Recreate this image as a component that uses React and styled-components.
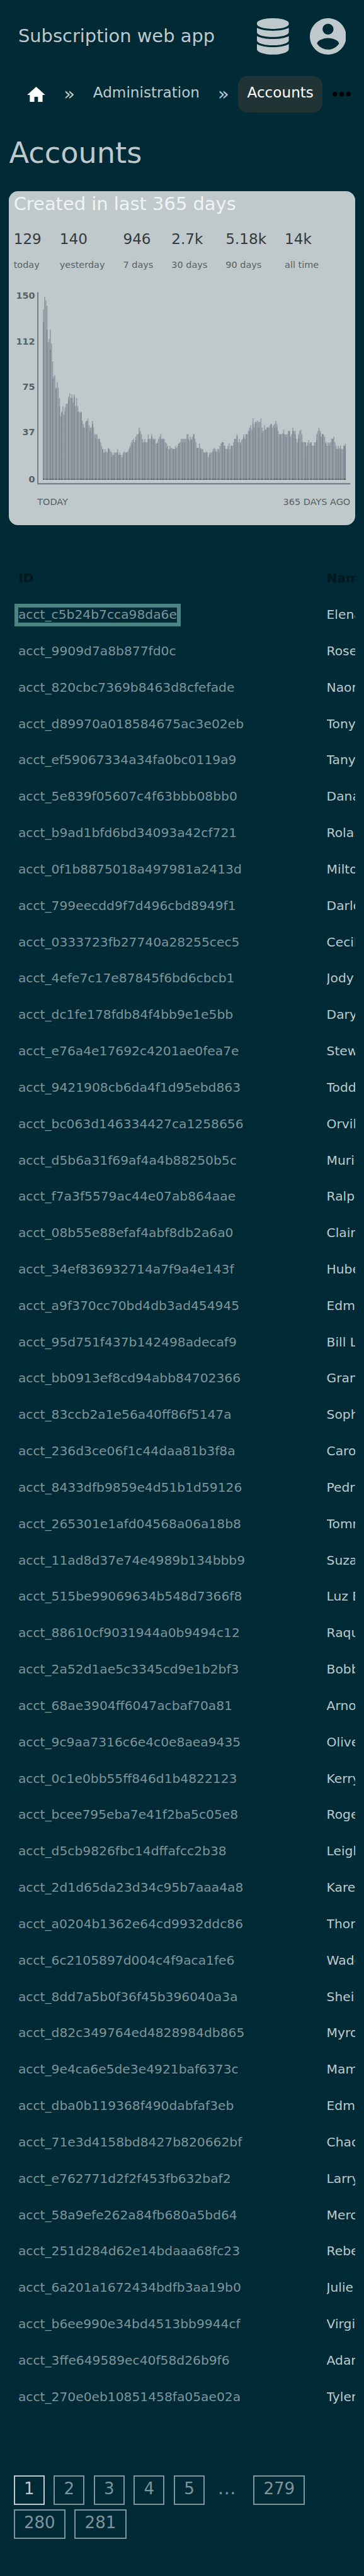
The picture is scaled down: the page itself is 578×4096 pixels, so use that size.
import React from "react";
import styled, { createGlobalStyle } from "styled-components";

const SCALE = 4096 / 4532;
const u = (n) => `${n * SCALE}px`;

const c = {
  page: "#002b36",
  text: "#bfc9cc",
  muted: "#7f9499",
  card: "#bfc9cc",
  ink: "#333b3d",
  inkSoft: "#566163",
  axis: "#6c7780",
  focus: "#4b8583",
};

const GlobalStyle = createGlobalStyle`
  *, *::before, *::after { box-sizing: border-box; }
  html, body { margin: 0; padding: 0; background: ${c.page}; }
  body { font-family: "DejaVu Sans", sans-serif; color: ${c.text}; }
  svg { display: block; flex: none; }
`;

const Page = styled.div`
  width: 578px;
  height: 4096px;
  overflow: hidden;
  display: flex;
  flex-direction: column;
`;

const Header = styled.header`
  display: flex;
  align-items: center;
  height: ${u(134)};
  padding: 0 ${u(31.6)} ${u(6)} ${u(32)};
`;

const AppName = styled.div`
  flex: 1;
  font-size: ${u(32)};
  line-height: ${u(40)};
  padding-bottom: ${u(2)};
  white-space: nowrap;
`;

const HeaderIcons = styled.div`
  display: flex;
  gap: ${u(36)};
`;

const Nav = styled.nav`
  display: flex;
  align-items: center;
  gap: ${u(16)};
  height: ${u(64)};
  padding: 0 ${u(23.6)} 0 ${u(32)};
`;

const Crumb = styled.a`
  display: flex;
  align-items: center;
  height: ${u(64)};
  padding: 0 ${u(16)} ${(p) => (p.$icon ? 0 : u(6))};
  border-radius: ${u(16)};
  font-size: ${u(25.6)};
  white-space: nowrap;
  color: ${(p) => (p.$active ? "#fff" : c.text)};
  background: ${(p) => (p.$active ? "#203435" : "transparent")};
`;

const Separator = styled.span`
  font-size: ${u(32)};
  line-height: ${u(40)};
  padding-bottom: ${u(3)};
`;

const Heading = styled.h1`
  margin: 0;
  height: ${u(138)};
  padding: ${u(6)} ${u(16)} 0;
  font-size: ${u(51.2)};
  font-weight: 400;
  line-height: ${u(132)};
`;

const Card = styled.section`
  margin: 0 ${u(15.6)} 0 ${u(16)};
  height: ${u(588)};
  border-radius: ${u(16)};
  background: ${c.card};
`;

const CardTitle = styled.h2`
  margin: 0;
  padding: 0 ${u(8)};
  font-size: ${u(32)};
  font-weight: 400;
  line-height: ${u(46)};
  color: #f0f3f4;
`;

const Stats = styled.div`
  display: flex;
  gap: ${u(32)};
  height: ${u(118)};
  padding: ${u(16)} ${u(8)} 0;
`;

const Stat = styled.div`
  display: flex;
  flex-direction: column;
  gap: ${u(9)};
  white-space: nowrap;
`;

const StatValue = styled.span`
  font-size: ${u(25.6)};
  line-height: ${u(46)};
  color: ${c.ink};
`;

const StatLabel = styled.span`
  font-size: ${u(16)};
  line-height: ${u(28)};
  color: ${c.inkSoft};
`;

const ChartText = styled.text`
  font-size: 16px;
  font-weight: ${(p) => (p.$bold ? 700 : 400)};
  fill: ${c.inkSoft};
`;

const Table = styled.div`
  margin: ${u(62)} ${u(15.6)} 0 ${u(16)};
  overflow: hidden;
`;

const Row = styled.div`
  display: grid;
  grid-template-columns: ${u(541.8)} 1fr;
  align-items: center;
  height: ${u(64)};
  padding-left: ${u(16)};
  font-size: ${u(22.4)};
  line-height: ${u(26)};
  white-space: nowrap;
`;

const HeadRow = styled(Row)`
  font-weight: 700;
  color: #00171d;
`;

const AccountLink = styled.a`
  justify-self: start;
  color: ${c.muted};
  outline: ${(p) => (p.$focused ? `6px solid ${c.focus}` : "none")};
`;

const Name = styled.span`
  overflow: hidden;
`;

const Pagination = styled.div`
  display: flex;
  flex-wrap: wrap;
  gap: ${u(8)} ${u(16)};
  padding: ${u(106)} ${u(64)} 0 ${u(24)};
`;

const PageLink = styled.a`
  height: ${u(52)};
  padding: 0 ${u(15.8)};
  border: 2px solid currentColor;
  font-size: ${u(28.8)};
  line-height: ${u(44)};
  color: ${(p) => (p.$current ? c.text : c.muted)};
`;

const Ellipsis = styled.span`
  width: ${u(53.5)};
  padding-left: ${u(7)};
  font-size: ${u(32)};
  line-height: ${u(46)};
  color: ${c.muted};
`;

/* Each entry is one pixel column: [height, height of the overlapped part]. */
const bars = [
  [150,139],[161],[158],[153,132],[121],[124],[132,115],[120],[104,89],[91],[92],[81,80],[86],[81],[72,65],[56],
  [60,59],[65],[57],[64,60],[67],[67],[73,70],[76],[72],[75,72],[68],[75,73],[65],[72],[65,60],[60],[59],[60,59],
  [52],[49,46],[46],[51],[52,52],[54],[48],[46,43],[46],[52,49],[46],[40],[40,36],[40],[36],[36,36],[33],[30],
  [27,27],[24],[27,24],[25],[24],[28,27],[27],[25],[24,20],[22],[24,22],[24],[24],[27,24],[22],[24,22],[22],[20],
  [24,22],[25],[24],[24,24],[25],[27],[30,28],[33],[35,32],[36],[33],[38,35],[40],[40],[46,41],[43],[40],[36,33],
  [33],[36,33],[33],[33],[40,36],[36],[36],[40,38],[36],[36,35],[36],[32],[33,32],[36],[38],[40,36],[36],[36,36],
  [36],[33],[32,28],[30],[27],[30,27],[28],[28],[27,27],[27],[30,27],[28],[30],[32,32],[33],[36],[36,33],[36],
  [36,33],[36],[40],[40,36],[35],[38],[36,35],[38],[40,40],[36],[33],[28,28],[28],[32],[28,27],[27],[27],[24,24],
  [24],[25,24],[24],[20],[24,22],[24],[24],[27,25],[28],[27,25],[25],[27],[27,24],[30],[32],[33,33],[33],[30,30],
  [27],[27],[30,27],[32],[27],[30,30],[30],[33],[36,36],[36],[40,38],[33],[36],[33,32],[35],[36],[40,38],[36],
  [40,40],[40],[43],[46,43],[48],[44],[54,49],[46],[51,49],[51],[52],[51,46],[51],[54],[46,41],[43],[48],[44,44],
  [46],[46,46],[46],[48],[49,49],[46],[48],[49,46],[52],[49,46],[43],[40],[40,40],[40],[41],[44,40],[40],[40,38],
  [40],[43],[43,43],[38],[40],[46,43],[43],[43,40],[36],[33],[40,36],[43],[44],[40,33],[33],[33],[33,33],[30],
  [33,30],[35],[32],[33,33],[30],[30],[33,30],[33],[40,35],[43],[46],[43,41],[38],[40,40],[40],[38],[33,32],[30],
  [33],[32,30],[33],[36],[36,36],[38],[33],[30,27],[27],[30,27],[28],[30,27],[27],[27],[30,30],[32,30],
];

const ticks = [
  ["150", 526],
  ["112", 606],
  ["75", 686],
  ["37", 766],
  ["0", 848],
];

const BASE = 844;
const LEFT = 76;

function Chart() {
  const area =
    `M${LEFT} ${BASE}` +
    bars.map(([h], i) => `V${BASE - h * 2}H${LEFT + (i + 1) * 2}`).join("") +
    `V${BASE}Z`;
  const overlap = bars
    .map(([, d], i) => (d ? `M${LEFT + i * 2} ${BASE}v${-d * 2}h2v${d * 2}z` : ""))
    .join("");
  const feet = bars
    .map(([, d], i) => (d ? `M${LEFT + i * 2} ${BASE}v-2h2v2z` : ""))
    .join("");
  return (
    <svg width={608 * SCALE} height={400 * SCALE} viewBox="16 500 608 400">
      <path d={area} fill="#969fa7" />
      <path d={overlap} fill="#818a92" />
      <rect x={LEFT} y={BASE - 2} width={bars.length * 2} height="2" fill="#78818a" />
      <path d={feet} fill="#555e65" />
      <path d="M67 514V851H616" fill="none" stroke={c.axis} strokeWidth="2" />
      {ticks.map(([label, y]) => (
        <ChartText key={label} $bold x="62" y={y} textAnchor="end">
          {label}
        </ChartText>
      ))}
      <ChartText x="66" y="888">TODAY</ChartText>
      <ChartText x="616" y="888" textAnchor="end">365 DAYS AGO</ChartText>
    </svg>
  );
}

const stats = [
  ["129", "today"],
  ["140", "yesterday"],
  ["946", "7 days"],
  ["2.7k", "30 days"],
  ["5.18k", "90 days"],
  ["14k", "all time"],
];

const accounts = [
  ["c5b24b7cca98da6e", "Elena"],
  ["9909d7a8b877fd0c", "Rose"],
  ["820cbc7369b8463d8cfefade", "Naomi"],
  ["d89970a018584675ac3e02eb", "Tony"],
  ["ef59067334a34fa0bc0119a9", "Tanya"],
  ["5e839f05607c4f63bbb08bb0", "Dana"],
  ["b9ad1bfd6bd34093a42cf721", "Roland"],
  ["0f1b8875018a497981a2413d", "Milton"],
  ["799eecdd9f7d496cbd8949f1", "Darlene"],
  ["0333723fb27740a28255cec5", "Cecil"],
  ["4efe7c17e87845f6bd6cbcb1", "Jody"],
  ["dc1fe178fdb84f4bb9e1e5bb", "Daryl"],
  ["e76a4e17692c4201ae0fea7e", "Stewart"],
  ["9421908cb6da4f1d95ebd863", "Todd"],
  ["bc063d146334427ca1258656", "Orville"],
  ["d5b6a31f69af4a4b88250b5c", "Muriel"],
  ["f7a3f5579ac44e07ab864aae", "Ralph"],
  ["08b55e88efaf4abf8db2a6a0", "Claire"],
  ["34ef836932714a7f9a4e143f", "Hubert"],
  ["a9f370cc70bd4db3ad454945", "Edmund"],
  ["95d751f437b142498adecaf9", "Bill L"],
  ["bb0913ef8cd94abb84702366", "Grant"],
  ["83ccb2a1e56a40ff86f5147a", "Sophie"],
  ["236d3ce06f1c44daa81b3f8a", "Carole"],
  ["8433dfb9859e4d51b1d59126", "Pedro"],
  ["265301e1afd04568a06a18b8", "Tommy"],
  ["11ad8d37e74e4989b134bbb9", "Suzanne"],
  ["515be99069634b548d7366f8", "Luz B"],
  ["88610cf9031944a0b9494c12", "Raquel"],
  ["2a52d1ae5c3345cd9e1b2bf3", "Bobby"],
  ["68ae3904ff6047acbaf70a81", "Arnold"],
  ["9c9aa7316c6e4c0e8aea9435", "Oliver"],
  ["0c1e0bb55ff846d1b4822123", "Kerry"],
  ["bcee795eba7e41f2ba5c05e8", "Roger"],
  ["d5cb9826fbc14dffafcc2b38", "Leigh"],
  ["2d1d65da23d34c95b7aaa4a8", "Karen"],
  ["a0204b1362e64cd9932ddc86", "Thomas"],
  ["6c2105897d004c4f9aca1fe6", "Wade"],
  ["8dd7a5b0f36f45b396040a3a", "Sheila"],
  ["d82c349764ed4828984db865", "Myron"],
  ["9e4ca6e5de3e4921baf6373c", "Mamie"],
  ["dba0b119368f490dabfaf3eb", "Edmund"],
  ["71e3d4158bd8427b820662bf", "Chad"],
  ["e762771d2f2f453fb632baf2", "Larry"],
  ["58a9efe262a84fb680a5bd64", "Mercedes"],
  ["251d284d62e14bdaaa68fc23", "Rebecca"],
  ["6a201a1672434bdfb3aa19b0", "Julie"],
  ["b6ee990e34bd4513bb9944cf", "Virginia"],
  ["3ffe649589ec40f58d26b9f6", "Adam"],
  ["270e0eb10851458fa05ae02a", "Tyler"],
];

const pages = ["1", "2", "3", "4", "5", "…", "279", "280", "281"];

function DatabaseIcon() {
  return (
    <svg width={56 * SCALE} height={64 * SCALE} viewBox="0 0 56 64" fill={c.text}>
      <path d="M0 8.8C0 3.9 12.5 0 28 0S56 3.9 56 8.8V10.2C56 15 43.5 18.7 28 18.7S0 15 0 10.2Z" />
      <path d="M0 17C6 20.4 16.5 22 28 22S50 20.4 56 17V24.5C56 29.2 43.5 33 28 33S0 29.2 0 24.5Z" />
      <path d="M0 31.2C6 34.8 16.5 36.5 28 36.5S50 34.8 56 31.2V39C56 43.8 43.5 47.7 28 47.7S0 43.8 0 39Z" />
      <path d="M0 45.3C6 49 16.5 50.8 28 50.8S50 49 56 45.3V54.5C56 59.7 43.5 64 28 64S0 59.7 0 54.5Z" />
    </svg>
  );
}

function AccountIcon() {
  return (
    <svg width={64 * SCALE} height={64 * SCALE} viewBox="2 2 20 20" fill={c.text}>
      <path d="M12 2C6.48 2 2 6.48 2 12s4.48 10 10 10 10-4.48 10-10S17.52 2 12 2zm0 3c1.66 0 3 1.34 3 3s-1.34 3-3 3-3-1.34-3-3 1.34-3 3-3zm0 14.2c-2.5 0-4.71-1.28-6-3.22.03-1.99 4-3.08 6-3.08 1.99 0 5.97 1.09 6 3.08-1.29 1.94-3.5 3.22-6 3.22z" />
    </svg>
  );
}

function HomeIcon() {
  return (
    <svg width={32 * SCALE} height={27.2 * SCALE} viewBox="2 3 20 17" fill="#fff">
      <path d="M10 20v-6h4v6h5v-8h3L12 3 2 12h3v8z" />
    </svg>
  );
}

const MoreIcon = styled.svg`
  margin-left: auto;
`;

export default function App() {
  return (
    <Page>
      <GlobalStyle />
      <Header>
        <AppName>Subscription web app</AppName>
        <HeaderIcons>
          <DatabaseIcon />
          <AccountIcon />
        </HeaderIcons>
      </Header>
      <Nav>
        <Crumb $icon>
          <HomeIcon />
        </Crumb>
        <Separator>»</Separator>
        <Crumb>Administration</Crumb>
        <Separator>»</Separator>
        <Crumb $active>Accounts</Crumb>
        <MoreIcon width={32 * SCALE} height={8 * SCALE} viewBox="0 0 32 8">
          <circle cx="4" cy="4" r="4" />
          <circle cx="16" cy="4" r="4" />
          <circle cx="28" cy="4" r="4" />
        </MoreIcon>
      </Nav>
      <Heading>Accounts</Heading>
      <Card>
        <CardTitle>Created in last 365 days</CardTitle>
        <Stats>
          {stats.map(([value, label]) => (
            <Stat key={label}>
              <StatValue>{value}</StatValue>
              <StatLabel>{label}</StatLabel>
            </Stat>
          ))}
        </Stats>
        <Chart />
      </Card>
      <Table>
        <HeadRow>
          <span>ID</span>
          <Name>Name</Name>
        </HeadRow>
        {accounts.map(([id, name], i) => (
          <Row key={id}>
            <AccountLink $focused={i === 0}>acct_{id}</AccountLink>
            <Name>{name}</Name>
          </Row>
        ))}
      </Table>
      <Pagination>
        {pages.map((p) =>
          p === "…" ? (
            <Ellipsis key={p}>{p}</Ellipsis>
          ) : (
            <PageLink key={p} $current={p === "1"}>
              {p}
            </PageLink>
          )
        )}
      </Pagination>
    </Page>
  );
}
